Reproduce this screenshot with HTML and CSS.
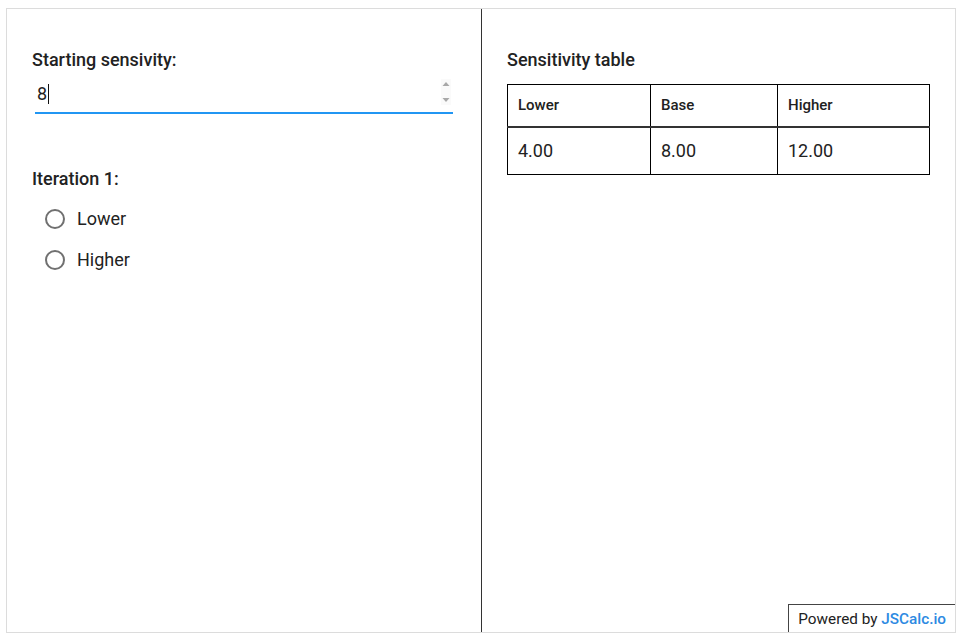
FILE: index.html
```html
<!DOCTYPE html>
<html>
<head>
    <title>Sensitivity calculator</title>
    <link rel="stylesheet" href="styles.css">
</head>
<body>
    <div class="calc">
        <!-- inputs -->
        <div class="panel panel-left">
            <div class="field">
                <label class="field-label" for="startInput">Starting sensivity:</label>
                <div class="number-input">
                    <span class="number-value">8<span class="caret"></span></span>
                    <span class="spinner">
                        <svg width="10" height="26" viewBox="0 0 10 26">
                            <path d="M1.5 7 L5 3 L8.5 7 Z" fill="#a8a8a8"/>
                            <path d="M1.5 19 L5 23 L8.5 19 Z" fill="#a8a8a8"/>
                        </svg>
                    </span>
                </div>
            </div>

            <div class="field field-radios">
                <div class="field-label">Iteration 1:</div>
                <div class="radio-list">
                    <label class="radio"><span class="radio-dot"></span>Lower</label>
                    <label class="radio"><span class="radio-dot"></span>Higher</label>
                </div>
            </div>
        </div>

        <!-- output -->
        <div class="panel panel-right">
            <div class="field-label">Sensitivity table</div>
            <table class="sens-table">
                <thead>
                    <tr><th>Lower</th><th>Base</th><th>Higher</th></tr>
                </thead>
                <tbody>
                    <tr><td>4.00</td><td>8.00</td><td>12.00</td></tr>
                </tbody>
            </table>
            <div class="powered">Powered by <span class="brand">JSCalc.io</span></div>
        </div>
    </div>
</body>
</html>
```

FILE: styles.css
```css
* {
    box-sizing: border-box;
}

body {
    margin: 0;
    font-family: Roboto, "Liberation Sans", sans-serif;
    color: #212121;
    background: #fff;
}

.calc {
    display: flex;
    margin: 8px 7px 0 6px;
    height: 625px;
    border: 1px solid #dcdcdc;
}

.panel {
    position: relative;
}

.panel-left {
    width: 475px;
    padding: 40px 28px 0 25px;
    border-right: 1px solid #333;
}

.panel-right {
    flex: 1;
    padding: 40px 25px 0 25px;
}

.field-label {
    display: block;
    font-size: 18px;
    font-weight: 500;
    line-height: 22px;
    color: #222;
}

.number-input {
    display: flex;
    align-items: flex-end;
    justify-content: space-between;
    margin: 4px 0 0 3px;
    height: 39px;
    padding-bottom: 7px;
    border-bottom: 2px solid #2196f3;
}

.number-value {
    padding-left: 2px;
    font-size: 18px;
    line-height: 22px;
    color: #222;
}

.caret {
    display: inline-block;
    width: 1px;
    height: 20px;
    margin-left: 1px;
    vertical-align: -4px;
    background: #111;
}

.spinner {
    display: flex;
    align-self: center;
    margin: 3px 2px 0 0;
    background: #fafafa;
}

.field-radios {
    margin-top: 54px;
}

.radio-list {
    margin-top: 8px;
}

.radio {
    display: flex;
    align-items: center;
    height: 41px;
    padding-left: 13px;
    font-size: 18px;
    color: #222;
}

.radio-dot {
    width: 20px;
    height: 20px;
    margin-right: 12px;
    border: 2px solid #707070;
    border-radius: 50%;
}

.sens-table {
    width: 100%;
    margin-top: 13px;
    border-collapse: collapse;
}

.sens-table th,
.sens-table td {
    border: 1px solid #000;
    padding: 0 10px;
    text-align: left;
}

.sens-table th {
    height: 42px;
    font-size: 15px;
    font-weight: 500;
    border-bottom: 2px solid #333;
}

.sens-table td {
    height: 48px;
    font-size: 18px;
    color: #222;
}

.sens-table th:nth-child(1) { width: 143px; }
.sens-table th:nth-child(2) { width: 127px; }

.powered {
    position: absolute;
    right: 0;
    bottom: 0;
    padding: 5px 9px 4px 9px;
    border-top: 1px solid #444;
    border-left: 1px solid #444;
    font-size: 15.3px;
    line-height: 18px;
    color: #222;
    background: #fff;
}

.brand {
    color: #2d8ae2;
    font-weight: 500;
}
```
